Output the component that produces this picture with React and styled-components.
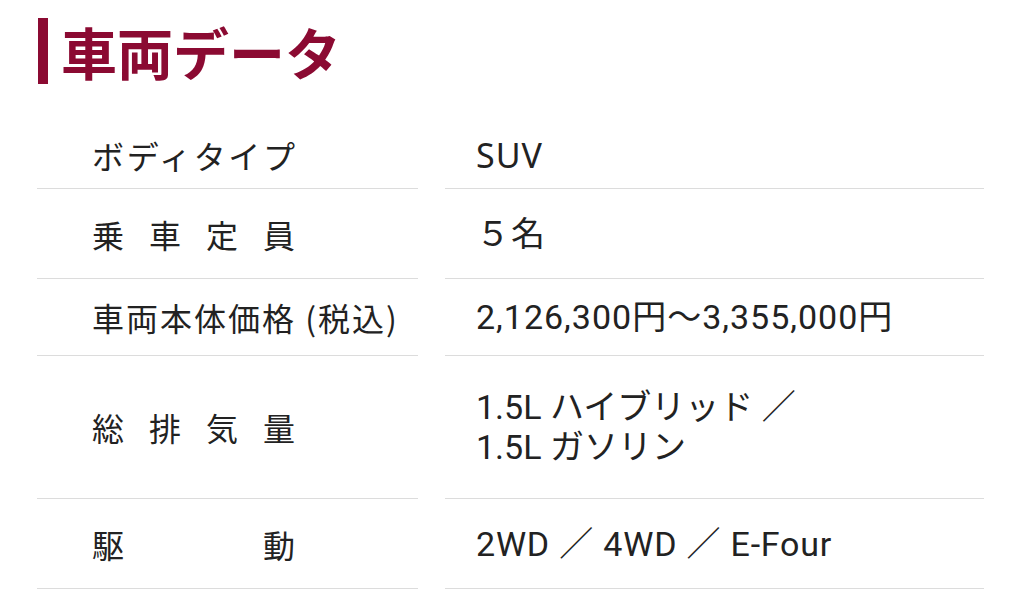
import React from 'react'
import styled, { createGlobalStyle } from 'styled-components'

const Global = createGlobalStyle`
  body {
    margin: 0;
    background: #fff;
    font-family: Roboto, "Noto Sans CJK JP", sans-serif;
    color: #222;
  }
`

const Page = styled.div`
  padding: 18px 40px 0 37px;
`

const Title = styled.h2`
  margin: 0 0 14px 1px;
  padding-left: 13px;
  border-left: 10px solid #8b0a32;
  color: #8b0a32;
  font-family: "Noto Sans CJK JP", sans-serif;
  font-size: 56px;
  font-weight: 700;
  line-height: 66px;
`

const Table = styled.div`
  display: flex;
  flex-direction: column;
`

const Row = styled.div`
  display: grid;
  grid-template-columns: 381px 1fr;
  column-gap: 27px;
  height: ${p => p.$h}px;
`

const Cell = styled.div`
  display: flex;
  align-items: center;
  padding-top: ${p => p.$top || 0}px;
  border-bottom: 1px solid #dcdcdc;
`

const Label = styled.div`
  margin-left: 55px;
  min-width: 205px;
  font-family: "Noto Sans CJK JP", sans-serif;
  font-size: 32px;
  letter-spacing: 2px;
  text-align: justify;
  text-align-last: ${p => (p.$spread ? 'justify' : 'left')};
  white-space: nowrap;
`

const Value = styled.div`
  margin-left: 31px;
  font-family: ${p => p.$font || 'Roboto'}, "Noto Sans CJK JP", sans-serif;
  font-size: 34px;
  line-height: 40px;
  letter-spacing: ${p => p.$ls ?? 1}px;
`

const rows = [
  { label: 'ボディタイプ', value: ['SUV'], h: 91, top: 24, spread: true, font: '"Noto Sans"' },
  { label: '乗 車 定 員', value: ['５名'], h: 90, spread: true },
  { label: '車両本体価格 (税込)', value: ['2,126,300円〜3,355,000円'], h: 77 },
  { label: '総 排 気 量', value: ['1.5L ハイブリッド ／', '1.5L ガソリン'], h: 143, spread: true, ls: 0 },
  { label: '駆 動', value: ['2WD ／ 4WD ／ E-Four'], h: 90, spread: true, ls: 0.8 },
]

export default function App() {
  return (
    <Page>
      <Global />
      <Title>車両データ</Title>
      <Table>
        {rows.map(r => (
          <Row key={r.label} $h={r.h}>
            <Cell $top={r.top}>
              <Label $spread={r.spread}>{r.label}</Label>
            </Cell>
            <Cell $top={r.top}>
              <Value $font={r.font} $ls={r.ls}>
                {r.value.map(v => (
                  <div key={v}>{v}</div>
                ))}
              </Value>
            </Cell>
          </Row>
        ))}
      </Table>
    </Page>
  )
}
